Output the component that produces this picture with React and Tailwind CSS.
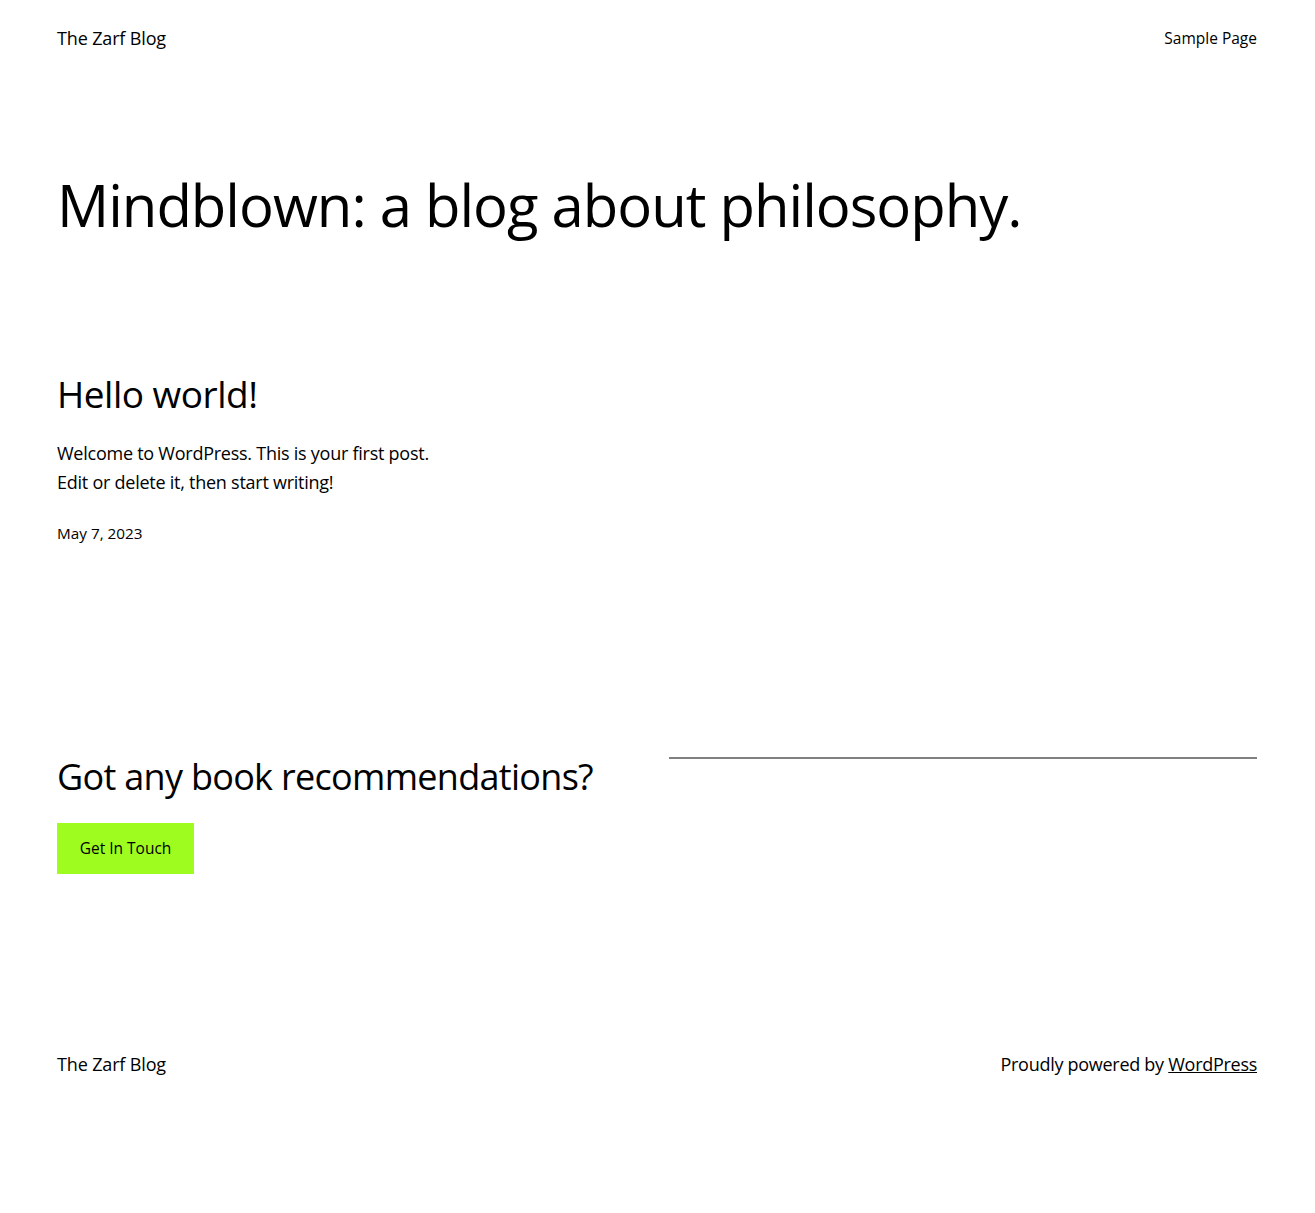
export default function App() {
  return (
    <div className="min-h-[1213px] bg-white pl-[57px] pr-[58px] text-black" style={{ fontFamily: '"Open Sans", "Noto Sans", sans-serif' }}>
      {/* header */}
      <header className="flex items-center justify-between pt-[26px]">
        <a className="text-[18px] leading-[24px] tracking-[-0.15px]">The Zarf Blog</a>
        <a className="text-[15.5px] leading-[24px]">Sample Page</a>
      </header>

      <main>
        <h1 className="mt-[115px] text-[58px] leading-[80px] font-normal tracking-[-1px]">Mindblown: a blog about philosophy.</h1>

        <article className="mt-[125px]">
          <h2 className="text-[37px] leading-[48px] tracking-[-0.5px]">Hello world!</h2>
          <div className="mt-[21px] max-w-[400px] text-[18px] leading-[29px] tracking-[-0.25px]">
            <p>Welcome to WordPress. This is your first post.</p>
            <p>Edit or delete it, then start writing!</p>
          </div>
          <p className="mt-[25px] text-[15.3px] leading-[22px]">May 7, 2023</p>
        </article>

        <section className="mt-[210px] grid grid-cols-2 gap-6">
          <div>
            <h2 className="text-[36px] leading-[46px] tracking-[-0.7px]">Got any book recommendations?</h2>
            <a className="mt-[23px] inline-flex h-[51px] w-[137px] items-center justify-center bg-[#9efc1f] text-[15.5px]">Get In Touch</a>
          </div>
          <div>
            <hr className="mt-[3px] border-t-2 border-[#808080]" />
          </div>
        </section>
      </main>

      <footer className="mt-[178px] flex items-center justify-between text-[18px] leading-[24px]">
        <a className="tracking-[-0.15px]">The Zarf Blog</a>
        <p className="tracking-[-0.28px]">
          Proudly powered by <a className="underline">WordPress</a>
        </p>
      </footer>
    </div>
  )
}
